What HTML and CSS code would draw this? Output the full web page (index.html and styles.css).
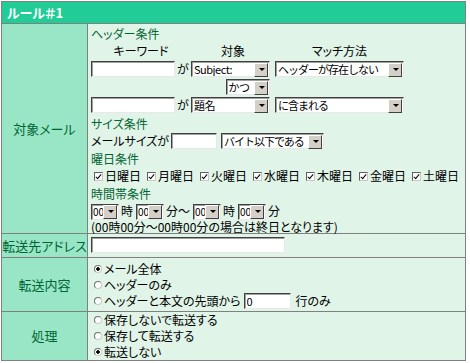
FILE: index.html
```html
<!DOCTYPE html>
<html lang="ja">
<head>
    <meta charset="UTF-8">
    <meta name="viewport" content="width=device-width, initial-scale=1.0">
    <title>ルール設定</title>

    <link rel="stylesheet" href="styles.css">
</head>
<body>

    <table class="rule">
        <tr>
            <th class="rule-title" colspan="2">ルール＃1</th>
        </tr>

        <tr>
            <td class="label">対象メール</td>
            <td class="body conditions">
                <div class="heading">ヘッダー条件</div>
                <div class="match-grid">
                    <span class="col-head">キーワード</span>
                    <span class="col-head">対象</span>
                    <span class="col-head">マッチ方法</span>

                    <span class="keyword"><input class="text kw-input" type="text">が</span>
                    <span class="select target"><select><option>Subject:</option></select></span>
                    <span class="select method"><select><option>ヘッダーが存在しない</option></select></span>

                    <span class="select joint"><select><option>かつ</option></select></span>

                    <span class="keyword"><input class="text kw-input" type="text">が</span>
                    <span class="select target"><select><option>題名</option></select></span>
                    <span class="select method"><select><option>に含まれる</option></select></span>
                </div>

                <div class="heading">サイズ条件</div>
                <div class="line">
                    メールサイズが
                    <input class="text size-input" type="text">
                    <span class="select size-select"><select><option>バイト以下である</option></select></span>
                </div>

                <div class="heading">曜日条件</div>
                <div class="days">
                    <label class="day"><input type="checkbox" checked>日曜日</label>
                    <label class="day"><input type="checkbox" checked>月曜日</label>
                    <label class="day"><input type="checkbox" checked>火曜日</label>
                    <label class="day"><input type="checkbox" checked>水曜日</label>
                    <label class="day"><input type="checkbox" checked>木曜日</label>
                    <label class="day"><input type="checkbox" checked>金曜日</label>
                    <label class="day"><input type="checkbox" checked>土曜日</label>
                </div>

                <div class="heading">時間帯条件</div>
                <div class="line time">
                    <span class="select clock"><select><option>00</option></select></span><span class="unit">時</span>
                    <span class="select clock"><select><option>00</option></select></span><span class="unit">分～</span>
                    <span class="select clock"><select><option>00</option></select></span><span class="unit">時</span>
                    <span class="select clock"><select><option>00</option></select></span><span class="unit">分</span>
                </div>
                <p class="note">(00時00分～00時00分の場合は終日となります)</p>
            </td>
        </tr>

        <tr>
            <td class="label">転送先アドレス</td>
            <td class="body">
                <input class="text address" type="text">
            </td>
        </tr>

        <tr>
            <td class="label">転送内容</td>
            <td class="body choices">
                <label class="option"><input type="radio" name="content" checked>メール全体</label>
                <label class="option"><input type="radio" name="content">ヘッダーのみ</label>
                <label class="option"><input type="radio" name="content">ヘッダーと本文の先頭から<input class="text lines" type="text" value="0"><span class="after">行のみ</span></label>
            </td>
        </tr>

        <tr>
            <td class="label">処理</td>
            <td class="body choices tight">
                <label class="option"><input type="radio" name="action">保存しないで転送する</label>
                <label class="option"><input type="radio" name="action">保存して転送する</label>
                <label class="option"><input type="radio" name="action" checked>転送しない</label>
            </td>
        </tr>
    </table>

</body>
</html>
```

FILE: styles.css
```css
* {
    margin: 0;
    padding: 0;
    box-sizing: border-box;
}

body {
    padding: 1px 0 0 1px;
    background-color: #fff;
    color: #000;
    font-family: "Noto Sans CJK JP", sans-serif;
    font-size: 12px;
    line-height: 16px;
    font-feature-settings: "palt";
}

.rule {
    border-collapse: collapse;
    width: 465px;
}

.rule th,
.rule td {
    border: 1px solid #808080;
}

.rule-title {
    height: 22px;
    padding-left: 5px;
    background-color: #22cc96;
    color: #fff;
    font-size: 13px;
    font-weight: bold;
    text-align: left;
}

.label {
    width: 87px;
    background-color: #99e6c6;
    color: #006633;
    font-size: 13px;
    text-align: center;
    vertical-align: middle;
}

.body {
    padding: 1px 3px 2px;
    background-color: #e0f4e8;
    vertical-align: top;
}

.conditions {
    padding-bottom: 0;
}

.choices {
    padding: 3px 3px 2px;
}

.choices.tight {
    padding: 0 3px;
}

.heading {
    color: #006633;
    height: 17px;
    line-height: 17px;
}

.match-grid {
    display: grid;
    grid-template-columns: 100px 84px 129px;
    grid-auto-rows: 18px;
    align-items: center;
    margin-bottom: 1px;
}

.col-head {
    text-align: center;
    line-height: 16px;
}

.keyword {
    display: flex;
    align-items: center;
}

.line {
    display: flex;
    align-items: center;
    height: 18px;
}

/* inputs */
.text {
    height: 16px;
    border: 1px solid;
    border-color: #404040 #e8e8e8 #e8e8e8 #404040;
    box-shadow: inset 1px 1px 0 #a0a0a0;
    background-color: #fff;
    font-family: inherit;
    font-size: 11px;
    padding: 0 2px;
    outline: none;
}

.kw-input {
    width: 84px;
    margin-right: 2px;
}

.size-input {
    width: 46px;
    margin-left: 2px;
}

.address {
    width: 194px;
    display: block;
    margin: 2px 0;
}

.lines {
    width: 47px;
    margin-left: 3px;
}

.after {
    margin-left: 5px;
}

/* selects */
.select {
    position: relative;
    display: inline-block;
    height: 16px;
}

.select select {
    appearance: none;
    width: 100%;
    height: 16px;
    border: 1px solid;
    border-color: #404040 #e8e8e8 #e8e8e8 #404040;
    box-shadow: inset 1px 1px 0 #a0a0a0;
    background-color: #fff;
    color: #000;
    font-family: inherit;
    font-size: 11px;
    letter-spacing: -0.5px;
    line-height: 14px;
    padding: 0 12px 0 2px;
    outline: none;
}

.select::after {
    content: "";
    position: absolute;
    right: 2px;
    top: 2px;
    width: 12px;
    height: 12px;
    background-color: #d4d0c8;
    border: 1px solid;
    border-color: #fff #404040 #404040 #fff;
}

.select::before {
    content: "";
    position: absolute;
    right: 5px;
    top: 7px;
    z-index: 1;
    border-left: 3px solid transparent;
    border-right: 3px solid transparent;
    border-top: 3px solid #000;
}

.target {
    width: 79px;
}

.method {
    width: 129px;
}

.method select,
.size-select select {
    letter-spacing: -1px;
}

.joint {
    width: 44px;
    grid-column: 1 / -1;
    justify-self: center;
}

.size-select {
    width: 103px;
    margin-left: 4px;
}

.clock {
    width: 28px;
}

.clock select {
    padding: 0 0 0 1px;
    font-size: 10px;
    letter-spacing: 0;
}

.unit {
    margin: 0 3px 0 2px;
    line-height: 12px;
}

/* checkboxes */
.days {
    display: flex;
    align-items: center;
    height: 18px;
}

.day {
    display: flex;
    align-items: center;
    width: 53px;
}

.day input {
    appearance: none;
    position: relative;
    width: 9px;
    height: 9px;
    margin: 0 2px 0 3px;
    border: 1px solid;
    border-color: #606060 #c8c8c8 #c8c8c8 #606060;
    background-color: #fff;
}

.day input:checked::after {
    content: "";
    position: absolute;
    left: 2px;
    top: 0;
    width: 2px;
    height: 5px;
    border-right: 1px solid #000;
    border-bottom: 1px solid #000;
    transform: rotate(40deg);
}

.note {
    line-height: 12px;
    margin-top: 1px;
}

/* radios */
.option {
    display: flex;
    align-items: center;
    height: 16px;
}

.option input[type="radio"] {
    appearance: none;
    width: 8px;
    height: 8px;
    margin: 0 2px 0 3px;
    border: 1px solid;
    border-color: #707070 #c8c8c8 #c8c8c8 #707070;
    border-radius: 50%;
    background-color: #fff;
}

.option input[type="radio"]:checked {
    background: radial-gradient(circle, #000 1.5px, #fff 2px);
}
```
